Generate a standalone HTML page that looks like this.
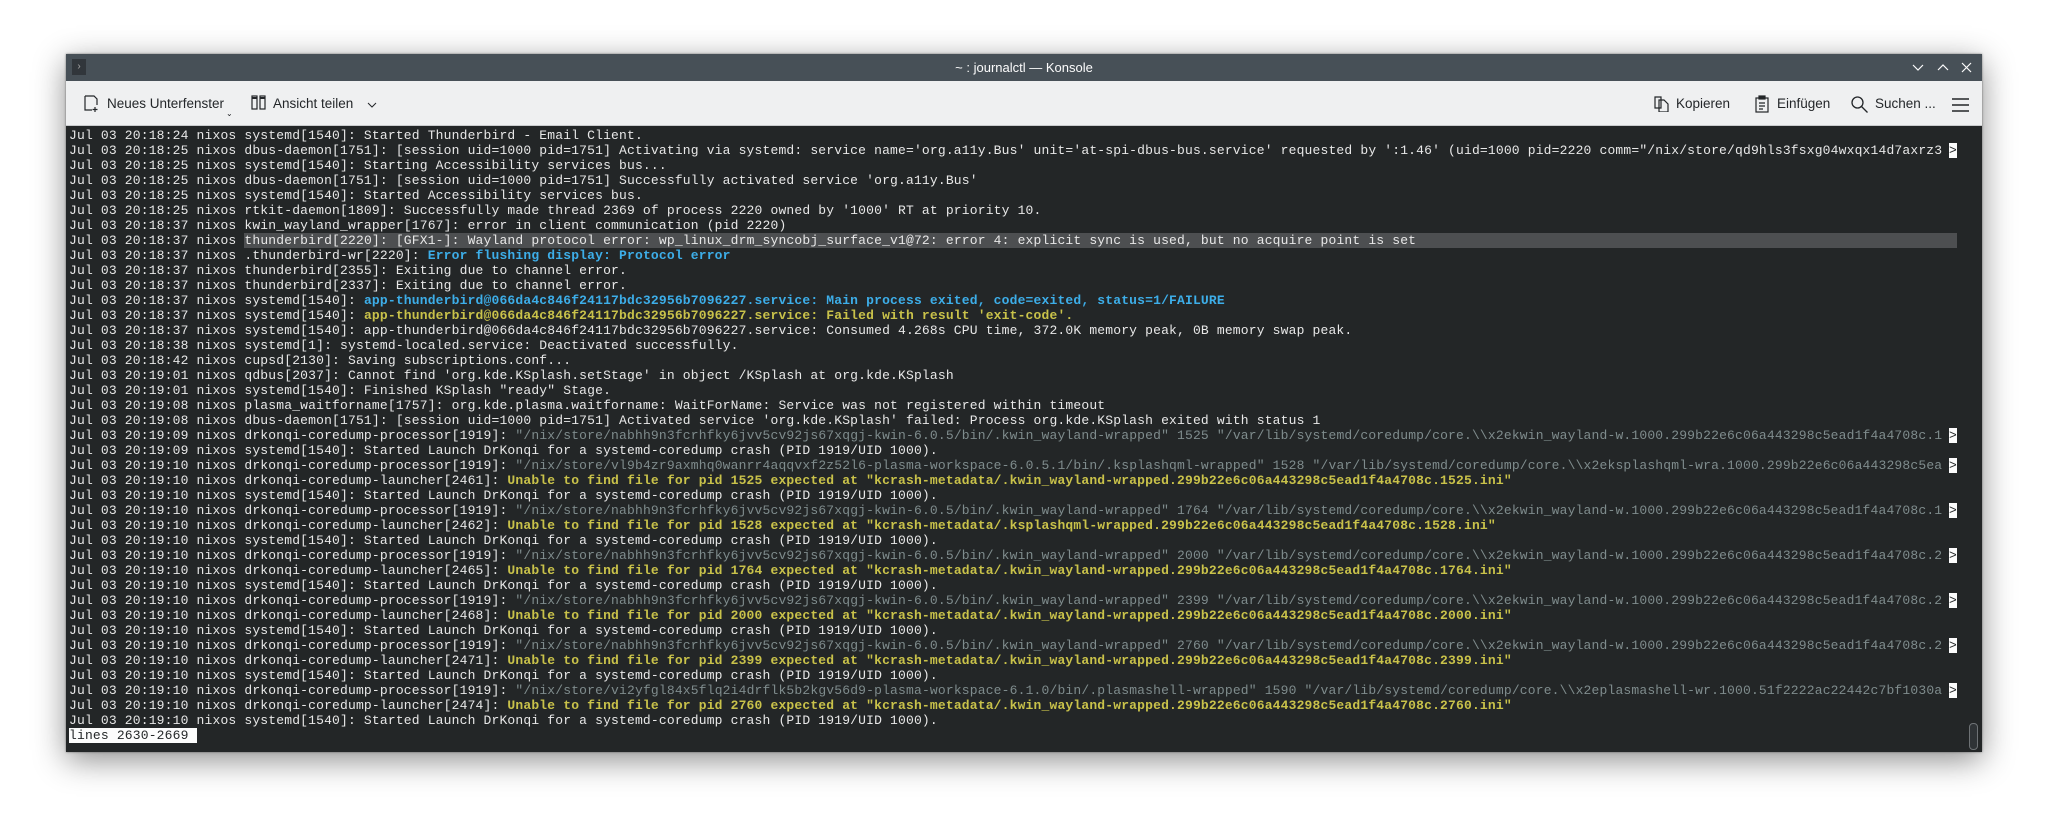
<!DOCTYPE html>
<html><head><meta charset="utf-8"><style>
body{margin:0;width:2050px;height:832px;background:#fff;position:relative;overflow:hidden;font-family:"Liberation Sans",sans-serif}
#win{position:absolute;left:66px;top:54px;width:1916px;height:698px;background:#232627;box-shadow:0 8px 30px rgba(0,0,0,.45),0 0 2px rgba(0,0,0,.5)}
#title{position:absolute;left:0;top:0;width:100%;height:27px;background:#475057;color:#fcfcfc;font-size:13px;text-align:center;line-height:27px}
#tb{position:absolute;left:0;top:27px;width:100%;height:44px;background:#eff0f1;border-bottom:1px solid #c9cbcd;color:#232629;font-size:13.5px}
#tb span{position:absolute;top:15px;white-space:nowrap}
#term{position:absolute;left:3px;top:74px;font-family:"Liberation Mono","DejaVu Sans Mono",monospace;font-size:13px;letter-spacing:0.17px;color:#e8e8e8;line-height:15px}
#term div{height:15px;overflow:hidden;width:1888px;position:relative;white-space:pre}
.g{color:#7f8c8d}.b{color:#3daee9;font-weight:bold}.y{color:#c9c24a;font-weight:bold}
.m{position:absolute;left:1880px;top:0;width:8px;background:#fcfcfc;color:#232627}
.hl{background:#4d4f51}
</style></head><body>
<div id="win">
<div id="title">~ : journalctl — Konsole
<div style="position:absolute;left:6px;top:5px;width:14px;height:16px;background:#31363b;color:#aaa;font-size:10px;line-height:16px">›</div>
<svg style="position:absolute;left:1843px;top:0" width="73" height="27" stroke="#fcfcfc" stroke-width="1.2" fill="none"><path d="M4 11l5 5 5-5"/><path d="M29 16l5-5 5 5"/><path d="M53 9l9 9M62 9l-9 9"/></svg>
</div>
<div id="tb">
<svg style="position:absolute;left:18px;top:14px" width="16" height="18" stroke="#232629" stroke-width="1.2" fill="none"><path d="M1 1h9l3 3v6M1 1v14h7"/><path d="M11 12v5M8.5 14.5h5"/></svg>
<span style="left:41px">Neues Unterfenster</span>
<span style="left:160px;top:28px;font-size:8px">⌄</span>
<svg style="position:absolute;left:185px;top:14px" width="15" height="16" stroke="#232629" stroke-width="1.2" fill="none"><rect x="1" y="1" width="5" height="13"/><rect x="9" y="1" width="5" height="13"/><path d="M1 3h5M9 3h5" stroke-width="2"/></svg>
<span style="left:207px">Ansicht teilen</span>
<svg style="position:absolute;left:301px;top:20px" width="10" height="8" stroke="#232629" fill="none"><path d="M1 2l4 4 4-4"/></svg>
<svg style="position:absolute;left:1588px;top:15px" width="16" height="16" stroke="#232629" stroke-width="1.2" fill="none"><path d="M1 1h6v11H1z"/><path d="M5 4h5l4 4v8H5z"/></svg>
<span style="left:1610px">Kopieren</span>
<svg style="position:absolute;left:1689px;top:14px" width="14" height="18" stroke="#232629" stroke-width="1.2" fill="none"><rect x="1" y="3" width="12" height="14"/><rect x="4" y="1" width="6" height="3" fill="#232629"/><path d="M4 8h6M4 11h6M4 14h4"/></svg>
<span style="left:1711px">Einfügen</span>
<svg style="position:absolute;left:1785px;top:15px" width="18" height="18" stroke="#232629" stroke-width="1.3" fill="none"><circle cx="6.5" cy="6.5" r="5.5"/><path d="M10.5 10.5l6 6"/></svg>
<span style="left:1809px">Suchen ...</span>
<svg style="position:absolute;left:1886px;top:17px" width="17" height="14" stroke="#232629" stroke-width="1.6"><path d="M0 1h17M0 7h17M0 13h17"/></svg>
</div>
<div id="term">
<div>Jul 03 20:18:24 nixos systemd[1540]: Started Thunderbird - Email Client.</div>
<div>Jul 03 20:18:25 nixos dbus-daemon[1751]: [session uid=1000 pid=1751] Activating via systemd: service name='org.a11y.Bus' unit='at-spi-dbus-bus.service' requested by ':1.46' (uid=1000 pid=2220 comm="/nix/store/qd9hls3fsxg04wxqx14d7axrz3<span class="m">&gt;</span></div>
<div>Jul 03 20:18:25 nixos systemd[1540]: Starting Accessibility services bus...</div>
<div>Jul 03 20:18:25 nixos dbus-daemon[1751]: [session uid=1000 pid=1751] Successfully activated service 'org.a11y.Bus'</div>
<div>Jul 03 20:18:25 nixos systemd[1540]: Started Accessibility services bus.</div>
<div>Jul 03 20:18:25 nixos rtkit-daemon[1809]: Successfully made thread 2369 of process 2220 owned by '1000' RT at priority 10.</div>
<div>Jul 03 20:18:37 nixos kwin_wayland_wrapper[1767]: error in client communication (pid 2220)</div>
<div>Jul 03 20:18:37 nixos <span class="hl">thunderbird[2220]: [GFX1-]: Wayland protocol error: wp_linux_drm_syncobj_surface_v1@72: error 4: explicit sync is used, but no acquire point is set                                                                                                                              </span></div>
<div>Jul 03 20:18:37 nixos .thunderbird-wr[2220]: <span class="b">Error flushing display: Protocol error</span></div>
<div>Jul 03 20:18:37 nixos thunderbird[2355]: Exiting due to channel error.</div>
<div>Jul 03 20:18:37 nixos thunderbird[2337]: Exiting due to channel error.</div>
<div>Jul 03 20:18:37 nixos systemd[1540]: <span class="b">app-thunderbird@066da4c846f24117bdc32956b7096227.service: Main process exited, code=exited, status=1/FAILURE</span></div>
<div>Jul 03 20:18:37 nixos systemd[1540]: <span class="y">app-thunderbird@066da4c846f24117bdc32956b7096227.service: Failed with result 'exit-code'.</span></div>
<div>Jul 03 20:18:37 nixos systemd[1540]: app-thunderbird@066da4c846f24117bdc32956b7096227.service: Consumed 4.268s CPU time, 372.0K memory peak, 0B memory swap peak.</div>
<div>Jul 03 20:18:38 nixos systemd[1]: systemd-localed.service: Deactivated successfully.</div>
<div>Jul 03 20:18:42 nixos cupsd[2130]: Saving subscriptions.conf...</div>
<div>Jul 03 20:19:01 nixos qdbus[2037]: Cannot find 'org.kde.KSplash.setStage' in object /KSplash at org.kde.KSplash</div>
<div>Jul 03 20:19:01 nixos systemd[1540]: Finished KSplash "ready" Stage.</div>
<div>Jul 03 20:19:08 nixos plasma_waitforname[1757]: org.kde.plasma.waitforname: WaitForName: Service was not registered within timeout</div>
<div>Jul 03 20:19:08 nixos dbus-daemon[1751]: [session uid=1000 pid=1751] Activated service 'org.kde.KSplash' failed: Process org.kde.KSplash exited with status 1</div>
<div>Jul 03 20:19:09 nixos drkonqi-coredump-processor[1919]: <span class="g">"/nix/store/nabhh9n3fcrhfky6jvv5cv92js67xqgj-kwin-6.0.5/bin/.kwin_wayland-wrapped" 1525 "/var/lib/systemd/coredump/core.\\x2ekwin_wayland-w.1000.299b22e6c06a443298c5ead1f4a4708c.1</span><span class="m">&gt;</span></div>
<div>Jul 03 20:19:09 nixos systemd[1540]: Started Launch DrKonqi for a systemd-coredump crash (PID 1919/UID 1000).</div>
<div>Jul 03 20:19:10 nixos drkonqi-coredump-processor[1919]: <span class="g">"/nix/store/vl9b4zr9axmhq0wanrr4aqqvxf2z52l6-plasma-workspace-6.0.5.1/bin/.ksplashqml-wrapped" 1528 "/var/lib/systemd/coredump/core.\\x2eksplashqml-wra.1000.299b22e6c06a443298c5ea</span><span class="m">&gt;</span></div>
<div>Jul 03 20:19:10 nixos drkonqi-coredump-launcher[2461]: <span class="y">Unable to find file for pid 1525 expected at "kcrash-metadata/.kwin_wayland-wrapped.299b22e6c06a443298c5ead1f4a4708c.1525.ini"</span></div>
<div>Jul 03 20:19:10 nixos systemd[1540]: Started Launch DrKonqi for a systemd-coredump crash (PID 1919/UID 1000).</div>
<div>Jul 03 20:19:10 nixos drkonqi-coredump-processor[1919]: <span class="g">"/nix/store/nabhh9n3fcrhfky6jvv5cv92js67xqgj-kwin-6.0.5/bin/.kwin_wayland-wrapped" 1764 "/var/lib/systemd/coredump/core.\\x2ekwin_wayland-w.1000.299b22e6c06a443298c5ead1f4a4708c.1</span><span class="m">&gt;</span></div>
<div>Jul 03 20:19:10 nixos drkonqi-coredump-launcher[2462]: <span class="y">Unable to find file for pid 1528 expected at "kcrash-metadata/.ksplashqml-wrapped.299b22e6c06a443298c5ead1f4a4708c.1528.ini"</span></div>
<div>Jul 03 20:19:10 nixos systemd[1540]: Started Launch DrKonqi for a systemd-coredump crash (PID 1919/UID 1000).</div>
<div>Jul 03 20:19:10 nixos drkonqi-coredump-processor[1919]: <span class="g">"/nix/store/nabhh9n3fcrhfky6jvv5cv92js67xqgj-kwin-6.0.5/bin/.kwin_wayland-wrapped" 2000 "/var/lib/systemd/coredump/core.\\x2ekwin_wayland-w.1000.299b22e6c06a443298c5ead1f4a4708c.2</span><span class="m">&gt;</span></div>
<div>Jul 03 20:19:10 nixos drkonqi-coredump-launcher[2465]: <span class="y">Unable to find file for pid 1764 expected at "kcrash-metadata/.kwin_wayland-wrapped.299b22e6c06a443298c5ead1f4a4708c.1764.ini"</span></div>
<div>Jul 03 20:19:10 nixos systemd[1540]: Started Launch DrKonqi for a systemd-coredump crash (PID 1919/UID 1000).</div>
<div>Jul 03 20:19:10 nixos drkonqi-coredump-processor[1919]: <span class="g">"/nix/store/nabhh9n3fcrhfky6jvv5cv92js67xqgj-kwin-6.0.5/bin/.kwin_wayland-wrapped" 2399 "/var/lib/systemd/coredump/core.\\x2ekwin_wayland-w.1000.299b22e6c06a443298c5ead1f4a4708c.2</span><span class="m">&gt;</span></div>
<div>Jul 03 20:19:10 nixos drkonqi-coredump-launcher[2468]: <span class="y">Unable to find file for pid 2000 expected at "kcrash-metadata/.kwin_wayland-wrapped.299b22e6c06a443298c5ead1f4a4708c.2000.ini"</span></div>
<div>Jul 03 20:19:10 nixos systemd[1540]: Started Launch DrKonqi for a systemd-coredump crash (PID 1919/UID 1000).</div>
<div>Jul 03 20:19:10 nixos drkonqi-coredump-processor[1919]: <span class="g">"/nix/store/nabhh9n3fcrhfky6jvv5cv92js67xqgj-kwin-6.0.5/bin/.kwin_wayland-wrapped" 2760 "/var/lib/systemd/coredump/core.\\x2ekwin_wayland-w.1000.299b22e6c06a443298c5ead1f4a4708c.2</span><span class="m">&gt;</span></div>
<div>Jul 03 20:19:10 nixos drkonqi-coredump-launcher[2471]: <span class="y">Unable to find file for pid 2399 expected at "kcrash-metadata/.kwin_wayland-wrapped.299b22e6c06a443298c5ead1f4a4708c.2399.ini"</span></div>
<div>Jul 03 20:19:10 nixos systemd[1540]: Started Launch DrKonqi for a systemd-coredump crash (PID 1919/UID 1000).</div>
<div>Jul 03 20:19:10 nixos drkonqi-coredump-processor[1919]: <span class="g">"/nix/store/vi2yfgl84x5flq2i4drflk5b2kgv56d9-plasma-workspace-6.1.0/bin/.plasmashell-wrapped" 1590 "/var/lib/systemd/coredump/core.\\x2eplasmashell-wr.1000.51f2222ac22442c7bf1030a</span><span class="m">&gt;</span></div>
<div>Jul 03 20:19:10 nixos drkonqi-coredump-launcher[2474]: <span class="y">Unable to find file for pid 2760 expected at "kcrash-metadata/.kwin_wayland-wrapped.299b22e6c06a443298c5ead1f4a4708c.2760.ini"</span></div>
<div>Jul 03 20:19:10 nixos systemd[1540]: Started Launch DrKonqi for a systemd-coredump crash (PID 1919/UID 1000).</div>
<div><span style="background:#fcfcfc;color:#232627">lines 2630-2669 </span></div>
</div>
<div style="position:absolute;left:1903px;top:669px;width:7px;height:25px;border:1px solid #6e7275;border-radius:4px;background:#2f3336"></div>
</div>
</body></html>
